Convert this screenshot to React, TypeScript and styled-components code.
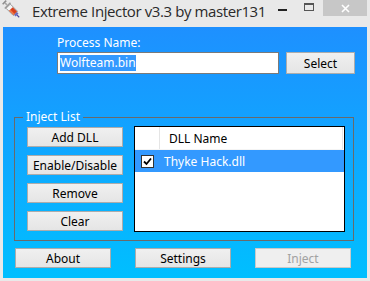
import React from "react";
import styled, { createGlobalStyle } from "styled-components";

const Global = createGlobalStyle`
  html, body { margin: 0; padding: 0; background: #e9e9e9; }
  body { font-family: "Noto Sans", "Open Sans", sans-serif; }
`;

const Window = styled.div`
  width: 370px;
  height: 281px;
  box-sizing: border-box;
  background: #e9e9e9;
  display: flex;
  flex-direction: column;
  padding: 0 3px 3px 3px;
  overflow: hidden;
`;

const TitleBar = styled.div`
  height: 27px;
  display: flex;
  align-items: flex-start;
  margin: 0 -3px;
`;

const AppIcon = styled.div`
  width: 20px;
  height: 20px;
  margin: 0 0 0 2px;
  flex: none;
`;

const Title = styled.div`
  font-family: "Open Sans", "Noto Sans", sans-serif;
  font-size: 15px;
  color: #2a2a2a;
  margin: 1px 0 0 10px;
  line-height: 20px;
  letter-spacing: -0.4px;
  flex: 1;
`;

const Controls = styled.div`
  display: flex;
  align-items: flex-start;
  height: 16px;
  margin-right: 3px;
`;

const CtlButton = styled.div<{ $w: number; $close?: boolean }>`
  width: ${(p) => p.$w}px;
  height: 16px;
  display: flex;
  align-items: center;
  justify-content: center;
  background: ${(p) => (p.$close ? "#c7c7c7" : "transparent")};
`;

const Client = styled.div`
  flex: 1;
  background: linear-gradient(to bottom, #1e90ff 0%, #00bfff 100%);
  display: flex;
  flex-direction: column;
  padding: 8px 0 0 0;
  box-sizing: border-box;
`;

const ProcessBlock = styled.div`
  margin-left: 54px;
  display: flex;
  flex-direction: column;
`;

const Label = styled.div`
  color: #ffffff;
  font-size: 12px;
  line-height: 16px;
  height: 16px;
  margin-bottom: 1px;
`;

const InputRow = styled.div`
  display: flex;
  gap: 7px;
`;

const TextBox = styled.div`
  width: 222px;
  height: 22px;
  box-sizing: border-box;
  background: #ffffff;
  border: 1px solid #7a7a7a;
  display: flex;
  align-items: center;
  padding-left: 2px;
`;

const Selected = styled.span`
  background: #3399ff;
  color: #ffffff;
  font-size: 12px;
  line-height: 16px;
`;

const Button = styled.div<{ $w: number; $h?: number; $disabled?: boolean }>`
  width: ${(p) => p.$w}px;
  height: ${(p) => p.$h ?? 20}px;
  box-sizing: border-box;
  border: 1px solid ${(p) => (p.$disabled ? "#c9c9c9" : "#acacac")};
  background: ${(p) =>
    p.$disabled ? "#efefef" : "linear-gradient(to bottom, #f0f0f0, #e5e5e5)"};
  color: ${(p) => (p.$disabled ? "#a2a2a2" : "#000000")};
  font-size: 12px;
  display: flex;
  align-items: center;
  justify-content: center;
  flex: none;
`;

const Group = styled.fieldset`
  margin: 35px 0 0 11px;
  width: 339px;
  height: 132px;
  box-sizing: border-box;
  border: 1px solid #6a6a6a;
  padding: 0 8px 0 12px;
  display: flex;
  gap: 11px;
`;

const Legend = styled.legend`
  color: #ffffff;
  font-size: 12px;
  line-height: 16px;
  padding: 0 3px;
  margin-left: -4px;
`;

const ButtonColumn = styled.div`
  display: flex;
  flex-direction: column;
  gap: 8px;
  padding-top: 2px;
`;

const ListView = styled.div`
  width: 211px;
  height: 106px;
  box-sizing: border-box;
  border: 1px solid #000000;
  background: #ffffff;
  margin-top: 1px;
  display: flex;
  flex-direction: column;
`;

const Header = styled.div`
  height: 22px;
  display: flex;
  background: #ffffff;
  border-bottom: 1px solid #f4f4f4;
  margin-right: 1px;
`;

const HeaderCell = styled.div<{ $w?: number }>`
  ${(p) => (p.$w ? `width: ${p.$w}px; flex: none;` : "flex: 1;")}
  border-right: 1px solid #e5e5e5;
  font-size: 12px;
  color: #000;
  display: flex;
  align-items: center;
  padding-left: ${(p) => (p.$w ? 0 : 9)}px;
`;

const Row = styled.div`
  height: 22px;
  background: #3399ff;
  display: flex;
  align-items: center;
  padding-left: 6px;
  gap: 10px;
  color: #ffffff;
  font-size: 12px;
`;

const Check = styled.div`
  width: 13px;
  height: 13px;
  box-sizing: border-box;
  border: 1px solid #333;
  background: #fff;
  display: flex;
  align-items: center;
  justify-content: center;
`;

const BottomRow = styled.div`
  display: flex;
  margin: 7px 0 0 12px;
  gap: 24px;
`;

const SyringeIcon = () => (
  <svg width="20" height="20" viewBox="0 0 20 20">
    <g transform="rotate(-45 10 10)">
      <rect x="7.5" y="-1.5" width="5" height="1.6" fill="#8e8e8e" />
      <rect x="9.2" y="0" width="1.6" height="3" fill="#a8a8a8" />
      <rect x="6" y="3" width="8" height="1.6" fill="#9c9c9c" />
      <rect x="7" y="4.6" width="6" height="10.4" rx="0.6" fill="#f4f4f4" stroke="#8a8a8a" strokeWidth="0.8" />
      <rect x="7.5" y="8.5" width="5" height="6.2" fill="#d8401c" />
      <rect x="7.5" y="8.5" width="1.6" height="6.2" fill="#f07a4a" />
      <rect x="8" y="15" width="4" height="2.2" fill="#6a6ac0" />
      <rect x="9.4" y="17.2" width="1.2" height="3" fill="#4a4a9a" />
    </g>
  </svg>
);

export default function App() {
  return (
    <>
      <Global />
      <Window>
        <TitleBar>
          <AppIcon>
            <SyringeIcon />
          </AppIcon>
          <Title>Extreme Injector v3.3 by master131</Title>
          <Controls>
            <CtlButton $w={26}>
              <svg width="10" height="10" viewBox="0 0 10 10">
                <rect x="0" y="6" width="9" height="2" fill="#222" />
              </svg>
            </CtlButton>
            <CtlButton $w={27}>
              <svg width="11" height="10" viewBox="0 0 11 10">
                <rect x="0.5" y="0.5" width="9" height="7" fill="none" stroke="#555" />
                <rect x="0.5" y="0.5" width="9" height="1.5" fill="#555" />
              </svg>
            </CtlButton>
            <CtlButton $w={44} $close>
              <svg width="9" height="9" viewBox="0 0 9 9">
                <path d="M1 1 L8 8 M8 1 L1 8" stroke="#fff" strokeWidth="1.6" />
              </svg>
            </CtlButton>
          </Controls>
        </TitleBar>
        <Client>
          <ProcessBlock>
            <Label>Process Name:</Label>
            <InputRow>
              <TextBox>
                <Selected>Wolfteam.bin</Selected>
              </TextBox>
              <Button $w={69} $h={22}>Select</Button>
            </InputRow>
          </ProcessBlock>
          <Group>
            <Legend>Inject List</Legend>
            <ButtonColumn>
              <Button $w={96}>Add DLL</Button>
              <Button $w={96}>Enable/Disable</Button>
              <Button $w={96}>Remove</Button>
              <Button $w={96}>Clear</Button>
            </ButtonColumn>
            <ListView>
              <Header>
                <HeaderCell $w={24} />
                <HeaderCell>DLL Name</HeaderCell>
              </Header>
              <Row>
                <Check>
                  <svg width="9" height="9" viewBox="0 0 9 9">
                    <path d="M1 4.5 L3.5 7 L8 1.5" stroke="#000" strokeWidth="1.8" fill="none" />
                  </svg>
                </Check>
                <span>Thyke Hack.dll</span>
              </Row>
            </ListView>
          </Group>
          <BottomRow>
            <Button $w={96}>About</Button>
            <Button $w={96}>Settings</Button>
            <Button $w={96} $disabled>Inject</Button>
          </BottomRow>
        </Client>
      </Window>
    </>
  );
}
